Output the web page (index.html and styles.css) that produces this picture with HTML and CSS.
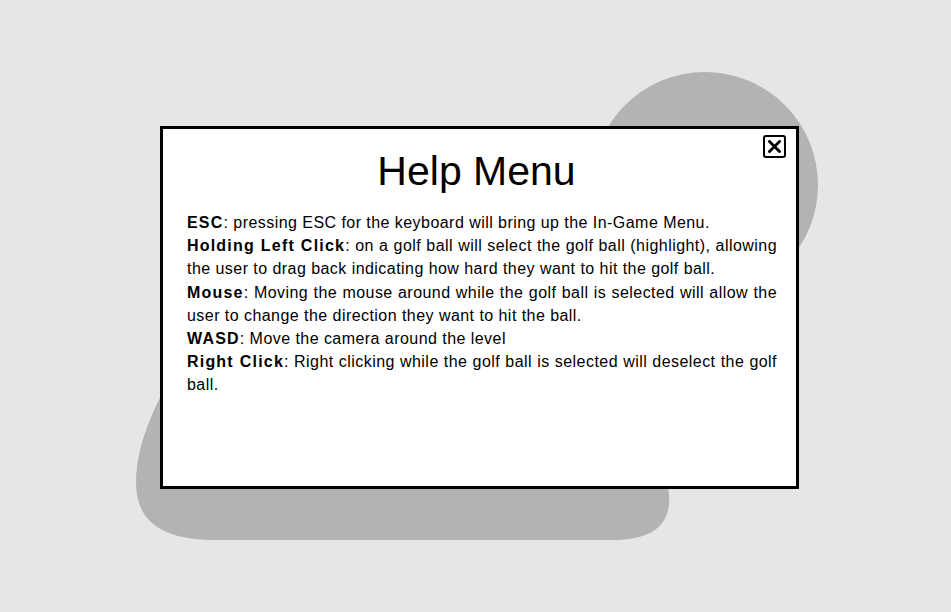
FILE: index.html
```html
<!DOCTYPE html>
<html lang="en">
<head>
<meta charset="utf-8">
<title>Help Menu</title>
<link rel="stylesheet" href="styles.css">
</head>
<body>
<div class="page">
  <svg class="blob" width="951" height="612" viewBox="0 0 951 612" aria-hidden="true">
    <circle cx="705" cy="185" r="113" fill="#b3b3b3"/>
    <path d="M 178 365 C 160 395 136 440 136 482 C 136 522 162 540 216 540 L 613 540 C 652 540 672 525 669 493 L 665 470 Z" fill="#b3b3b3"/>
  </svg>
  <div class="dialog">
    <button class="close" type="button" aria-label="Close">
      <svg width="13" height="13" viewBox="0 0 13 13"><path d="M1.5 1.5 L11.5 11.5 M11.5 1.5 L1.5 11.5" stroke="#000" stroke-width="2.8" stroke-linecap="square" fill="none"/></svg>
    </button>
    <h1 class="title">Help Menu</h1>
    <div class="content">
      <p class="item"><b>ESC</b>: pressing ESC for the keyboard will bring up the In-Game Menu.</p>
      <p class="item"><b>Holding Left Click</b>: on a golf ball will select the golf ball (highlight), allowing the user to drag back indicating how hard they want to hit the golf ball.</p>
      <p class="item"><b>Mouse</b>: Moving the mouse around while the golf ball is selected will allow the user to change the direction they want to hit the ball.</p>
      <p class="item"><b>WASD</b>: Move the camera around the level</p>
      <p class="item"><b>Right Click</b>: Right clicking while the golf ball is selected will deselect the golf ball.</p>
    </div>
  </div>
</div>
</body>
</html>
```

FILE: styles.css
```css
html, body {
  margin: 0;
  padding: 0;
  background: #e6e6e6;
}

.page {
  position: relative;
  width: 951px;
  height: 612px;
  box-sizing: border-box;
  padding: 126px 0 0 160px;
  font-family: "Liberation Sans", Arial, sans-serif;
  color: #000;
  overflow: hidden;
}

.blob {
  position: absolute;
  left: 0;
  top: 0;
  z-index: 0;
}

.dialog {
  position: relative;
  z-index: 1;
  box-sizing: border-box;
  width: 639px;
  height: 363px;
  border: 3px solid #000;
  background: #fff;
  padding: 18px 19px 0 24px;
}

.close {
  position: absolute;
  top: 6px;
  right: 10px;
  width: 23px;
  height: 23px;
  box-sizing: border-box;
  border: 2px solid #000;
  border-radius: 3px;
  background: #fff;
  padding: 0;
  display: flex;
  align-items: center;
  justify-content: center;
}

.title {
  margin: 0;
  padding-right: 11px;
  font-size: 41px;
  font-weight: normal;
  line-height: 48px;
  text-align: center;
}

.content {
  margin-top: 16px;
  font-size: 16px;
  line-height: 23.2px;
  letter-spacing: 0.45px;
}

.item {
  margin: 0;
  text-align: justify;
}

.item b {
  letter-spacing: 1.2px;
}
```
